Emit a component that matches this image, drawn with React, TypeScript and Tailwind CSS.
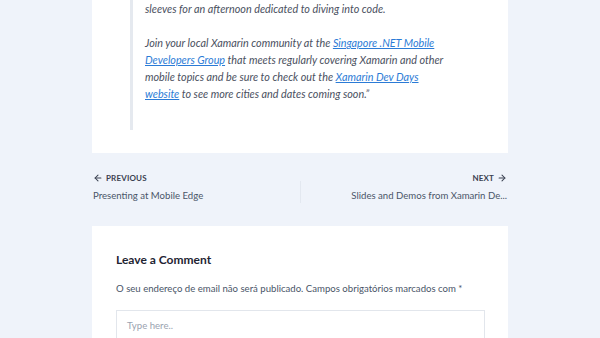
import { ArrowLeft, ArrowRight } from 'lucide-react';

const font = { fontFamily: 'Lato, "Noto Sans", sans-serif' };

function Quote() {
  return (
    <div className="bg-white pl-[38px] pr-[24px] pb-[23px]">
      <blockquote className="border-l-[3px] border-[#e5e9ef] pl-[12px] pb-[28px] italic text-[10.8px] leading-[17px] text-[#4a5060] whitespace-nowrap">
        <p>sleeves for an afternoon dedicated to diving into code.</p>
        <p className="mt-[17px]">
          Join your local Xamarin community at the{' '}
          <a href="#" className="text-[#2b7bd6] underline">Singapore .NET Mobile</a>
          <br />
          <a href="#" className="text-[#2b7bd6] underline">Developers Group</a> that meets regularly covering Xamarin and other
          <br />
          mobile topics and be sure to check out the{' '}
          <a href="#" className="text-[#2b7bd6] underline">Xamarin Dev Days</a>
          <br />
          <a href="#" className="text-[#2b7bd6] underline">website</a> to see more cities and dates coming soon.”
        </p>
      </blockquote>
    </div>
  );
}

function PostNav() {
  return (
    <nav className="flex items-start pt-[19px] pb-[23px] text-[#4a5568]">
      <div className="flex-1 pl-px">
        <div className="flex items-center gap-[3px] text-[8px] font-bold tracking-[0.02em] text-[#3a4150] leading-[12px]">
          <ArrowLeft size={10} strokeWidth={2.5} />
          PREVIOUS
        </div>
        <div className="mt-[5px] text-[9.6px] leading-[14px]">Presenting at Mobile Edge</div>
      </div>
      <div className="w-px h-[22px] bg-[#e3e8f0] mt-[9px]" />
      <div className="flex-1 flex flex-col items-end pr-px">
        <div className="flex items-center gap-[3px] text-[8px] font-bold tracking-[0.02em] text-[#3a4150] leading-[12px]">
          NEXT
          <ArrowRight size={10} strokeWidth={2.5} />
        </div>
        <div className="mt-[5px] text-[9.6px] leading-[14px]">Slides and Demos from Xamarin De...</div>
      </div>
    </nav>
  );
}

function CommentForm() {
  return (
    <section className="bg-white pt-[24px] pl-[24px] pr-[23px] pb-[24px]">
      <h3 className="text-[12px] font-bold leading-[20px] text-[#1f2533]">Leave a Comment</h3>
      <p className="mt-[11px] text-[9.6px] leading-[16px] text-[#4a5568]">
        O seu endereço de email não será publicado. Campos obrigatórios marcados com *
      </p>
      <textarea
        placeholder="Type here.."
        className="mt-[13px] block w-full h-[100px] border border-[#e2e6ec] px-[10px] py-[8px] text-[9.6px] leading-[14px] placeholder:text-[#9aa3b0] resize-none outline-none"
      />
    </section>
  );
}

export default function App() {
  return (
    <div className="min-h-screen bg-[#eff3fa]" style={font}>
      <div className="w-[416px] mx-auto">
        <Quote />
        <PostNav />
        <CommentForm />
      </div>
    </div>
  );
}
